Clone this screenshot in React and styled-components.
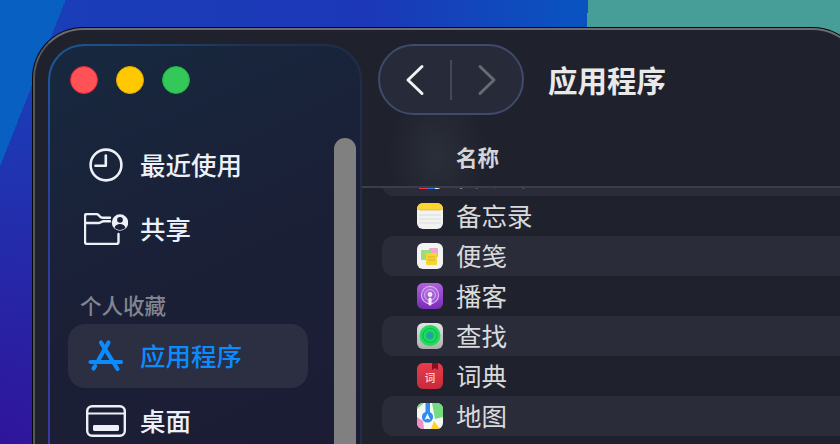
import React from 'react'
import styled, { createGlobalStyle } from 'styled-components'

const Global = createGlobalStyle`
  html, body {
    margin: 0;
    padding: 0;
    height: 100%;
    overflow: hidden;
    background: #1a3cb8;
  }
  * { box-sizing: border-box; }
`

const Desktop = styled.div`
  width: 840px;
  height: 444px;
  overflow: hidden;
  padding: 28px 0 0 33px;
  font-family: "Noto Sans CJK SC", "Noto Sans", sans-serif;
  background:
    linear-gradient(94deg, transparent 587px, #479e98 587px),
    linear-gradient(111.5deg, #0860c2 61px, transparent 61px),
    radial-gradient(circle at 0 444px, #30149a 0, rgba(48, 20, 154, 0) 360px),
    linear-gradient(90deg, #1a3eb8 0, #1c38b8 44%, #0a52c0 68%);
`

const Window = styled.div`
  width: 830px;
  height: 440px;
  display: flex;
  align-items: flex-start;
  padding: 14px 0 0 13px;
  border: 2px solid #55565e;
  border-top-color: #6c6d74;
  border-radius: 50px 50px 0 0;
  background: #1f222d;
  box-shadow: 0 0 0 1px #05060a;
`

const Sidebar = styled.aside`
  position: relative;
  flex: none;
  width: 314px;
  height: 430px;
  overflow: hidden;
  padding: 20px 0 0 18px;
  border: 2px solid transparent;
  border-radius: 36px 36px 0 0;
  background:
    linear-gradient(155deg, #17293f 0%, #1a2037 45%, #1c1c33 100%) padding-box,
    linear-gradient(90deg, rgba(32, 46, 78, 0) 0, #1f3150 65%, #222c4a 100%) border-box,
    linear-gradient(180deg, #1a5aa0 0%, #2a3f9c 40%, #3c38a8 100%) border-box;
`

const Lights = styled.div`
  display: flex;
  gap: 18px;
  margin: 0 0 39px 2px;
`

const Light = styled.span`
  width: 28px;
  height: 28px;
  border-radius: 50%;
  background: ${p => p.$fill};
  border: 1px solid ${p => p.$edge};
`

const Item = styled.div`
  width: 240px;
  height: 64px;
  display: flex;
  align-items: center;
  padding-left: 14px;
  gap: 10px;
  border-radius: 17px;
  font-size: 25.5px;
  font-weight: 500;
  color: ${p => (p.$active ? '#0a8cff' : '#eef0f8')};
  background: ${p => (p.$active ? '#2c2e42' : 'transparent')};
  margin-bottom: ${p => (p.$active ? '1px' : '0')};
`

const ItemIcon = styled.span`
  flex: none;
  width: 48px;
  display: flex;
  justify-content: center;
  align-items: center;
`

const Label = styled.span`
  margin-bottom: 4px;
`

const SectionLabel = styled.div`
  height: 30px;
  margin: 29px 0 4px 12px;
  font-size: 21.5px;
  line-height: 30px;
  font-weight: 500;
  color: #83858f;
`

const Scrollbar = styled.div`
  position: absolute;
  top: 92px;
  right: 4px;
  bottom: -20px;
  width: 22px;
  border-radius: 11px;
  background: #808080;
`

const Main = styled.main`
  flex: 1;
  min-width: 0;
`

const Toolbar = styled.div`
  height: 71px;
  display: flex;
  align-items: center;
  gap: 24px;
  padding-left: 16px;
`

const NavPill = styled.div`
  width: 146px;
  height: 71px;
  display: flex;
  align-items: center;
  justify-content: space-between;
  padding: 0 25px;
  border: 2px solid #3f4a6c;
  border-radius: 36px;
  background: #272a39;
`

const NavDivider = styled.span`
  width: 2px;
  height: 40px;
  background: #464955;
`

const Title = styled.h1`
  margin: 0 0 2px;
  font-size: 29.5px;
  line-height: 40px;
  font-weight: 700;
  color: #e9e9ea;
`

const ColumnHeader = styled.div`
  height: 73px;
  padding: 27px 0 0 94px;
  border-bottom: 2px solid #3b3d4a;
  font-size: 21.5px;
  line-height: 30px;
  font-weight: 700;
  color: #d4d5d8;
  background:
    radial-gradient(ellipse 50px 70px at 75px 40px, rgba(70, 76, 84, 0.3), transparent),
    transparent;
`

const List = styled.div`
  height: 260px;
  overflow: hidden;
  padding-left: 20px;
`

const Rows = styled.div`
  margin-top: -32px;
`

const Row = styled.div`
  height: 40px;
  display: flex;
  align-items: center;
  gap: 13px;
  padding-left: 35px;
  border-radius: 12px 0 0 12px;
  font-size: 25.5px;
  color: #d9dadc;
  background: ${p => (p.$stripe ? '#2a2c39' : 'transparent')};
`

const AppGlyph = styled.svg`
  flex: none;
  width: 26px;
  height: 26px;
  display: block;
`

const ClockIcon = () => (
  <svg width="34" height="34" viewBox="0 0 34 34" fill="none" stroke="#eef0f8" strokeWidth="2.6" strokeLinecap="round" strokeLinejoin="round">
    <circle cx="17" cy="17" r="15.4" />
    <path d="M16.8 7.5V17.8H6.5" />
  </svg>
)

const SharedIcon = () => (
  <svg width="44" height="32" viewBox="0 0 44 32" fill="none">
    <path d="M34.5 21v8a2 2 0 0 1-2 2H3a2 2 0 0 1-2-2V3a2 2 0 0 1 2-2h9c2 0 2.6 1 3.6 2.2 .8 1 1.6 1.5 3.2 1.5H26" stroke="#eef0f8" strokeWidth="2.4" strokeLinecap="round" />
    <path d="M1.5 10H15c2 0 2.6-1.8 4.5-1.8H26" stroke="#eef0f8" strokeWidth="2.4" strokeLinecap="round" />
    <circle cx="36" cy="9.5" r="8.2" fill="#eef0f8" />
    <circle cx="36" cy="6.8" r="2.9" fill="#1a2037" />
    <path d="M30.6 14.8c.6-2.8 2.8-3.9 5.4-3.9s4.8 1.1 5.4 3.9c-1.4 1.3-3.3 2.1-5.4 2.1s-4-.8-5.4-2.1z" fill="#1a2037" />
  </svg>
)

const AppStoreIcon = () => (
  <svg width="36" height="34" viewBox="0 0 36 34" fill="none" stroke="#0a8cff" strokeWidth="4.2" strokeLinecap="round">
    <path d="M13 3.5L29.5 30" />
    <path d="M20.5 3.5L10.5 21" />
    <path d="M2.5 23H33" />
    <path d="M5.5 29.5l1.6-2.4" />
  </svg>
)

const DesktopIcon = () => (
  <svg width="40" height="32" viewBox="0 0 40 32" fill="none">
    <rect x="1.2" y="1.2" width="37.6" height="29.6" rx="5" stroke="#eef0f8" strokeWidth="2.4" />
    <path d="M1.5 8.5h37" stroke="#eef0f8" strokeWidth="2" />
    <rect x="7" y="20" width="26" height="6" rx="1.4" fill="#eef0f8" />
  </svg>
)

const ChevronLeft = () => (
  <svg width="20" height="32" viewBox="0 0 20 32" fill="none" stroke="#f2f2f4" strokeWidth="3" strokeLinecap="round" strokeLinejoin="round">
    <path d="M17 2.5L3 16l14 13.5" />
  </svg>
)

const ChevronRight = () => (
  <svg width="20" height="32" viewBox="0 0 20 32" fill="none" stroke="#686a74" strokeWidth="3" strokeLinecap="round" strokeLinejoin="round">
    <path d="M3 2.5L17 16 3 29.5" />
  </svg>
)

const ClippedIcon = () => (
  <AppGlyph viewBox="0 0 26 26">
    <rect width="26" height="26" rx="6" fill="#f4f4f6" />
    <rect x="2" y="24" width="8" height="2" fill="#e9344c" />
    <rect x="10" y="24" width="8" height="2" fill="#2f7bea" />
  </AppGlyph>
)

const NotesIcon = () => (
  <AppGlyph viewBox="0 0 26 26">
    <rect width="26" height="26" rx="6" fill="#f2f2f0" />
    <path d="M0 7V6a6 6 0 0 1 6-6h14a6 6 0 0 1 6 6v1z" fill="#fdd430" />
    <path d="M2 7h22" stroke="#c9a92c" strokeWidth="0.6" />
    <path d="M2 12h22M2 16h22M2 20h22" stroke="#d8d8d6" strokeWidth="0.8" />
  </AppGlyph>
)

const StickiesIcon = () => (
  <AppGlyph viewBox="0 0 26 26">
    <rect width="26" height="26" rx="6" fill="#f3f3f3" />
    <rect x="12" y="5" width="9" height="9" rx="1" fill="#f2a6c6" />
    <rect x="4" y="7" width="11" height="10" rx="1" fill="#9bdc7c" />
    <rect x="9" y="10" width="11" height="12" rx="1" fill="#f7d435" />
    <path d="M11 14h7M11 17h7" stroke="#d2ab20" strokeWidth="0.8" />
  </AppGlyph>
)

const PodcastIcon = () => (
  <AppGlyph viewBox="0 0 26 26">
    <defs>
      <linearGradient id="podcastFill" x1="0" y1="0" x2="0" y2="1">
        <stop offset="0" stopColor="#b060e0" />
        <stop offset="1" stopColor="#7a2cb8" />
      </linearGradient>
    </defs>
    <rect width="26" height="26" rx="6" fill="url(#podcastFill)" />
    <circle cx="13" cy="12" r="8.6" fill="#c48ae8" fillOpacity="0.35" stroke="#d8b4f0" strokeWidth="1.1" />
    <circle cx="13" cy="12" r="5.4" fill="none" stroke="#d8b4f0" strokeWidth="1" />
    <circle cx="13" cy="11.5" r="2.4" fill="#f4e8fa" />
    <rect x="11.4" y="14.5" width="3.2" height="8" rx="1.6" fill="#f4e8fa" />
  </AppGlyph>
)

const FindMyIcon = () => (
  <AppGlyph viewBox="0 0 26 26">
    <defs>
      <linearGradient id="findFill" x1="0" y1="0" x2="0" y2="1">
        <stop offset="0" stopColor="#e4e4e2" />
        <stop offset="1" stopColor="#aeb0aa" />
      </linearGradient>
    </defs>
    <rect width="26" height="26" rx="6" fill="url(#findFill)" />
    <circle cx="13" cy="12.5" r="10.5" fill="#1edc62" />
    <circle cx="13" cy="12.5" r="7" fill="none" stroke="#12b850" strokeWidth="1.2" />
    <circle cx="13" cy="12.5" r="4.2" fill="#14c058" />
    <circle cx="13" cy="12.5" r="2.6" fill="#2f8fd8" />
  </AppGlyph>
)

const DictionaryIcon = () => (
  <AppGlyph viewBox="0 0 26 26">
    <defs>
      <linearGradient id="dictFill" x1="0" y1="0" x2="0" y2="1">
        <stop offset="0" stopColor="#e83c4c" />
        <stop offset="1" stopColor="#c82a3c" />
      </linearGradient>
    </defs>
    <rect width="26" height="26" rx="6" fill="url(#dictFill)" />
    <path d="M15 0h6v7l-3-2-3 2z" fill="#8a1020" />
    <text x="13" y="18.5" textAnchor="middle" fontSize="10.5" fontWeight="500" fill="#f8dcdc" fontFamily="'Noto Sans CJK SC', sans-serif">词</text>
  </AppGlyph>
)

const MapsIcon = () => (
  <AppGlyph viewBox="0 0 26 26">
    <defs>
      <clipPath id="mapsClip">
        <rect width="26" height="26" rx="6" />
      </clipPath>
    </defs>
    <g clipPath="url(#mapsClip)">
      <rect width="26" height="26" fill="#f6f6f2" />
      <path d="M15 0h11v14l-8 2z" fill="#74dc80" />
      <path d="M0 0h7L0 6z" fill="#74dc80" />
      <path d="M0 14l6 4 1 8H0z" fill="#f090c8" />
      <path d="M14 26l3-8 6 8z" fill="#fbd32c" />
      <path d="M8.5 0h4.5v9H8.5z" fill="#2f8df0" />
      <circle cx="10.5" cy="14" r="5.6" fill="#2f8df0" />
      <path d="M10.5 10.6l2.8 6.2-2.8-1.3-2.8 1.3z" fill="#fff" />
    </g>
  </AppGlyph>
)

const apps = [
  { name: '自动操', icon: ClippedIcon },
  { name: '备忘录', icon: NotesIcon },
  { name: '便笺', icon: StickiesIcon },
  { name: '播客', icon: PodcastIcon },
  { name: '查找', icon: FindMyIcon },
  { name: '词典', icon: DictionaryIcon },
  { name: '地图', icon: MapsIcon },
]

export default function App() {
  return (
    <Desktop>
      <Global />
      <Window>
        <Sidebar>
          <Lights>
            <Light $fill="#ff5257" $edge="#e0283a" />
            <Light $fill="#ffc800" $edge="#e0a800" />
            <Light $fill="#34c85a" $edge="#1aae3c" />
          </Lights>
          <Item>
            <ItemIcon><ClockIcon /></ItemIcon>
            <Label>最近使用</Label>
          </Item>
          <Item>
            <ItemIcon><SharedIcon /></ItemIcon>
            <Label>共享</Label>
          </Item>
          <SectionLabel>个人收藏</SectionLabel>
          <Item $active>
            <ItemIcon><AppStoreIcon /></ItemIcon>
            <Label>应用程序</Label>
          </Item>
          <Item>
            <ItemIcon><DesktopIcon /></ItemIcon>
            <Label>桌面</Label>
          </Item>
          <Scrollbar />
        </Sidebar>
        <Main>
          <Toolbar>
            <NavPill>
              <ChevronLeft />
              <NavDivider />
              <ChevronRight />
            </NavPill>
            <Title>应用程序</Title>
          </Toolbar>
          <ColumnHeader>名称</ColumnHeader>
          <List>
            <Rows>
              {apps.map((app, i) => (
                <Row key={app.name} $stripe={i % 2 === 0}>
                  <app.icon />
                  <Label>{app.name}</Label>
                </Row>
              ))}
            </Rows>
          </List>
        </Main>
      </Window>
    </Desktop>
  )
}
